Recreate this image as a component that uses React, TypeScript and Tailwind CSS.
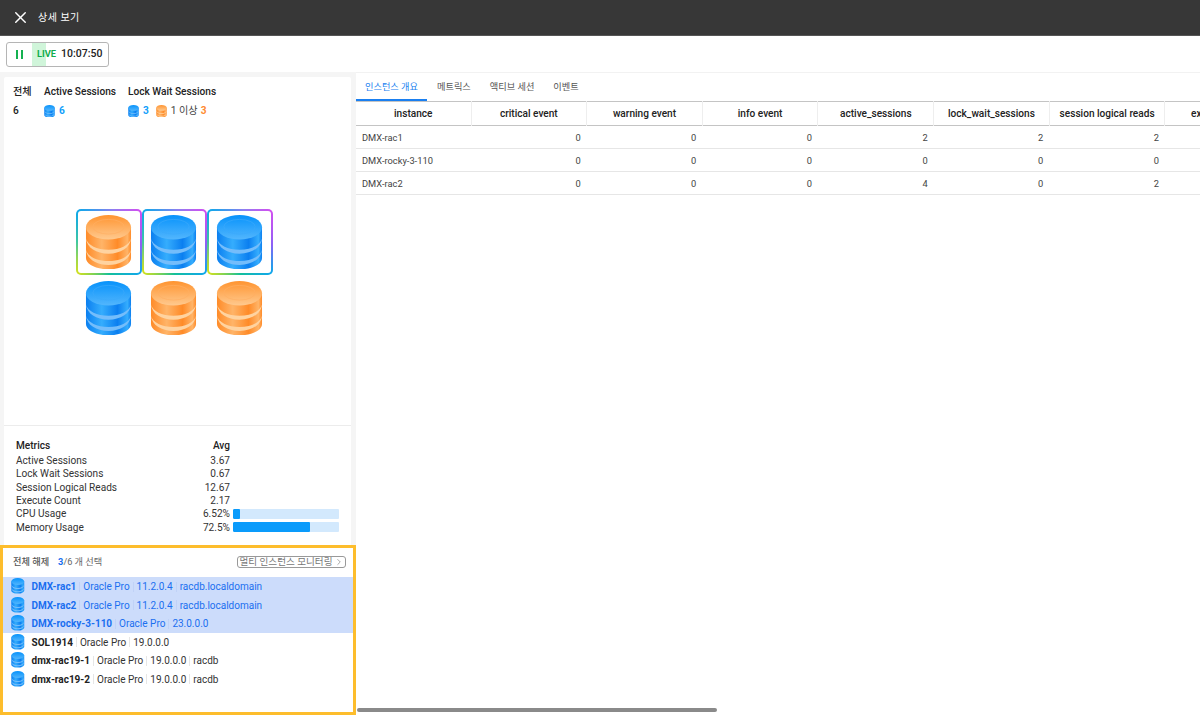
import { useId } from "react";
import { X, ChevronRight } from "lucide-react";

type Tone = "blue" | "orange";

const TONES = {
  blue: { top: "#0792fb", topLight: "#52b6fd", edge: "#0b7ff0", mid: "#35adfd", band: "#74bdfb", ring: "#3aa9fb" },
  orange: { top: "#ff9430", topLight: "#ffc98e", edge: "#ff8b28", mid: "#ffb468", band: "#ffd3a0", ring: "#ffae62" },
};

function DbIcon({ tone, size, ring = true }: { tone: Tone; size: number; ring?: boolean }) {
  const id = useId();
  const c = TONES[tone];
  return (
    <svg width={size} height={size * (56 / 48)} viewBox="0 0 48 56" className="shrink-0">
      <defs>
        <linearGradient id={`${id}side`} x1="0" y1="0" x2="1" y2="0">
          <stop offset="0" stopColor={c.edge} />
          <stop offset="0.35" stopColor={c.mid} />
          <stop offset="0.7" stopColor={c.edge} />
          <stop offset="0.92" stopColor={c.mid} />
          <stop offset="1" stopColor={c.edge} />
        </linearGradient>
        <linearGradient id={`${id}top`} x1="0" y1="0" x2="0" y2="1">
          <stop offset="0" stopColor={c.top} />
          <stop offset="1" stopColor={c.topLight} />
        </linearGradient>
      </defs>
      <path d="M1 12v32c0 6.500 10.300 11.500 23 11.500S47 50.500 47 44V12z" fill={`url(#${id}side)`} />
      <path d="M1 24c2 7 11 11.500 23 11.500S45 31 47 24c-1 9.500-10.500 15.500-23 15.500S2 33.500 1 24z" fill={c.band} />
      <path d="M1 35.500c2 7 11 11.500 23 11.500s21-4.500 23-11.500c-1 9.500-10.500 15.500-23 15.500S2 45 1 35.500z" fill={c.band} />
      <ellipse cx="24" cy="12.500" rx="23" ry="12.500" fill={`url(#${id}top)`} />
      {ring && <ellipse cx="24" cy="12" rx="16" ry="7.500" fill="none" stroke={c.ring} strokeWidth="0.7" />}
    </svg>
  );
}

function Cell({ tone, selected }: { tone: Tone; selected?: boolean }) {
  if (selected) {
    return (
      <div className="w-[65.500px] h-[66px] rounded-[5px] p-[2px] bg-[conic-gradient(from_45deg,#d050f0_0deg,#8c60f5_50deg,#10a8ea_90deg,#14c098_135deg,#d0e020_180deg,#40c8a0_225deg,#10a8ea_270deg,#8c80f0_320deg,#d050f0_360deg)]">
        <div className="w-full h-full rounded-[3px] bg-white flex items-center justify-center pr-[1px]">
          <DbIcon tone={tone} size={47} />
        </div>
      </div>
    );
  }
  return (
    <div className="w-[65.500px] h-[66px] flex items-center justify-center pr-[1px]">
      <DbIcon tone={tone} size={47} />
    </div>
  );
}

const METRICS = [
  { name: "Active Sessions", avg: "3.67" },
  { name: "Lock Wait Sessions", avg: "0.67" },
  { name: "Session Logical Reads", avg: "12.67" },
  { name: "Execute Count", avg: "2.17" },
  { name: "CPU Usage", avg: "6.52%", bar: 6.52 },
  { name: "Memory Usage", avg: "72.5%", bar: 72.5 },
];

const INSTANCES = [
  { name: "DMX-rac1", parts: ["Oracle Pro", "11.2.0.4", "racdb.localdomain"], selected: true },
  { name: "DMX-rac2", parts: ["Oracle Pro", "11.2.0.4", "racdb.localdomain"], selected: true },
  { name: "DMX-rocky-3-110", parts: ["Oracle Pro", "23.0.0.0"], selected: true },
  { name: "SOL1914", parts: ["Oracle Pro", "19.0.0.0"] },
  { name: "dmx-rac19-1", parts: ["Oracle Pro", "19.0.0.0", "racdb"] },
  { name: "dmx-rac19-2", parts: ["Oracle Pro", "19.0.0.0", "racdb"] },
];

const COLUMNS = [
  "instance",
  "critical event",
  "warning event",
  "info event",
  "active_sessions",
  "lock_wait_sessions",
  "session logical reads",
  "execute count",
];

const ROWS = [
  ["DMX-rac1", 0, 0, 0, 2, 2, 2, 0],
  ["DMX-rocky-3-110", 0, 0, 0, 0, 0, 0, 0],
  ["DMX-rac2", 0, 0, 0, 4, 0, 2, 0],
];

const TABS = ["인스턴스 개요", "메트릭스", "액티브 세션", "이벤트"];

export default function App() {
  return (
    <div className="w-[1200px] h-[715px] overflow-hidden bg-white text-[#222] flex flex-col font-['Roboto','Noto_Sans_CJK_KR',sans-serif]">
      <header className="h-[36px] shrink-0 bg-[#373737] border-b border-[#555] flex items-center pl-[11px] text-white">
        <X size={19} strokeWidth={1.8} />
        <span className="ml-[8px] text-[10px] tracking-[0.5px]">상세 보기</span>
      </header>

      <div className="h-[36px] shrink-0 flex items-center pl-[6px]">
        <div className="w-[103px] h-[25px] rounded-[3px] border border-[#b5b5b5] flex items-stretch overflow-hidden">
          <div className="w-[25px] flex items-center justify-center gap-[2.500px]">
            <span className="w-[2.500px] h-[9px] bg-[#15b150]" />
            <span className="w-[2.500px] h-[9px] bg-[#15b150]" />
          </div>
          <div className="relative flex items-center">
            <div className="w-[14px] h-full bg-[#d0f5da]" />
            <span className="absolute left-[5px] text-[9.300px] font-bold text-[#12ad4c]">LIVE</span>
          </div>
          <span className="ml-[15px] self-center text-[10.500px] font-medium text-[#222]">10:07:50</span>
        </div>
      </div>

      <div className="flex-1 min-h-0 flex">
        <aside className="w-[356px] shrink-0 flex flex-col bg-[#f5f5f5]">
          <div className="flex-1 min-h-0 mt-[5px] ml-[4px] mr-[5px] bg-white rounded-t-[2px] flex flex-col">
            <div className="h-[348px] shrink-0 pt-[8px] px-[9px] flex flex-col">
              <div className="flex gap-[12px] text-[10.150px] font-medium">
                <div className="w-[19px]">
                  <div className="h-[14px] leading-[14px] whitespace-nowrap">전체</div>
                  <div className="mt-[5px] h-[14px] leading-[14px]">6</div>
                </div>
                <div className="w-[72px]">
                  <div className="h-[14px] leading-[14px] whitespace-nowrap">Active Sessions</div>
                  <div className="mt-[5px] h-[14px] flex items-center gap-[4px]">
                    <DbIcon tone="blue" size={11} ring={false} />
                    <span className="text-[#12a0fb] font-bold">6</span>
                  </div>
                </div>
                <div>
                  <div className="h-[14px] leading-[14px] whitespace-nowrap">Lock Wait Sessions</div>
                  <div className="mt-[5px] h-[14px] flex items-center">
                    <DbIcon tone="blue" size={11} ring={false} />
                    <span className="ml-[4px] text-[#12a0fb] font-bold">3</span>
                    <span className="ml-[7px]"><DbIcon tone="orange" size={11} ring={false} /></span>
                    <span className="ml-[4px] font-normal text-[#444]">1 이상</span>
                    <span className="ml-[3px] text-[#ff8a30] font-bold">3</span>
                  </div>
                </div>
              </div>
              <div className="mt-[91px] ml-[63px] grid grid-cols-[65.500px_65.500px_65.500px]">
                <Cell tone="orange" selected />
                <Cell tone="blue" selected />
                <Cell tone="blue" selected />
                <Cell tone="blue" />
                <Cell tone="orange" />
                <Cell tone="orange" />
              </div>
            </div>

            <div className="flex-1 border-t border-[#ececec] pt-[13px] px-[12px] text-[10.100px] text-[#333]">
              <div className="flex font-medium text-[#222] h-[14px] leading-[14px]">
                <span className="w-[178px]">Metrics</span>
                <span className="w-[36px] text-right">Avg</span>
              </div>
              <div className="mt-[0.600px]">
                {METRICS.map((m) => (
                  <div key={m.name} className="flex items-center h-[13.400px]">
                    <span className="w-[178px] whitespace-nowrap">{m.name}</span>
                    <span className="w-[36px] text-right">{m.avg}</span>
                    {m.bar !== undefined && (
                      <div className="ml-[3px] w-[106px] h-[10px] rounded-[1px] bg-[#d3e9fd] overflow-hidden">
                        <div className="h-full rounded-[1px] bg-[#0a9bfb]" style={{ width: `${m.bar}%` }} />
                      </div>
                    )}
                  </div>
                ))}
              </div>
            </div>
          </div>

          <div className="h-[170px] shrink-0 border-[3px] border-[#fdbd2c] bg-white">
            <div className="h-[28px] flex items-center pl-[10px] pr-[7px] text-[9.200px] text-[#666]">
              <span className="font-medium text-[#555] whitespace-nowrap">전체 해제</span>
              <span className="ml-[9px] whitespace-nowrap">
                <b className="text-[#1a6ff0] font-bold">3</b>/6 개 선택
              </span>
              <div className="ml-auto h-[12px] w-[109px] rounded-[3px] border border-[#999] flex items-center justify-center whitespace-nowrap text-[9.600px] text-[#777] leading-none">
                멀티 인스턴스 모니터링
                <ChevronRight size={10} strokeWidth={1.5} className="ml-[1px]" />
              </div>
            </div>
            <div className="mt-[1px]">
              {INSTANCES.map((row) => (
                <div
                  key={row.name}
                  className={`h-[18.500px] flex items-center pl-[8px] text-[10px] whitespace-nowrap ${
                    row.selected ? "bg-[#ccdcfb] text-[#1a6ff0]" : "text-[#333]"
                  }`}
                >
                  <DbIcon tone="blue" size={13.500} ring={false} />
                  <span className={`ml-[7px] pt-[1px] font-bold ${row.selected ? "" : "text-[#222]"}`}>{row.name}</span>
                  {row.parts.map((p) => (
                    <span key={p} className="flex items-center pt-[1px]">
                      <span className={`mx-[3px] w-px h-[10px] ${row.selected ? "bg-[#c0d2f7]" : "bg-[#e6e6e6]"}`} />
                      {p}
                    </span>
                  ))}
                </div>
              ))}
            </div>
          </div>
        </aside>

        <main className="flex-1 min-w-0 flex flex-col border-t border-[#f2f2f2] bg-white">
          <nav className="h-[28px] shrink-0 flex gap-[19px] text-[9.200px] text-[#555]">
            {TABS.map((t, i) => (
              <div
                key={t}
                className={`flex items-center justify-center whitespace-nowrap ${
                  i === 0 ? "w-[71px] -mr-[9px] text-[#1a7ff0] border-b-[2px] border-[#1a7ff0] pt-[2px]" : ""
                }`}
              >
                {t}
              </div>
            ))}
          </nav>
          <div className="flex-1 min-h-0 overflow-hidden">
            <table className="w-[924.700px] table-fixed border-collapse text-[9.300px] text-[#444]">
              <thead>
                <tr className="h-[24px] border-y border-[#c4c4c4] text-[10.100px] text-[#222]">
                  {COLUMNS.map((c, i) => (
                    <th
                      key={c}
                      className={`p-0 font-medium text-center whitespace-nowrap border-r border-[#eeeeee] ${
                        i === 0 ? "w-[115px]" : "w-[115.670px]"
                      }`}
                    >
                      {c}
                    </th>
                  ))}
                </tr>
              </thead>
              <tbody>
                {ROWS.map((r) => (
                  <tr key={r[0]} className="h-[23px] border-b border-[#e6e6e6]">
                    {r.map((v, i) => (
                      <td key={i} className={`p-0 pt-[1px] whitespace-nowrap ${i === 0 ? "pl-[6px] text-left" : "pr-[6px] text-right"}`}>
                        {v}
                      </td>
                    ))}
                  </tr>
                ))}
              </tbody>
            </table>
          </div>
          <div className="h-[8px] shrink-0 pt-[1px] pl-[1px]">
            <div className="w-[360px] h-[4px] rounded-full bg-[#8a8a8a]" />
          </div>
        </main>
      </div>
    </div>
  );
}
